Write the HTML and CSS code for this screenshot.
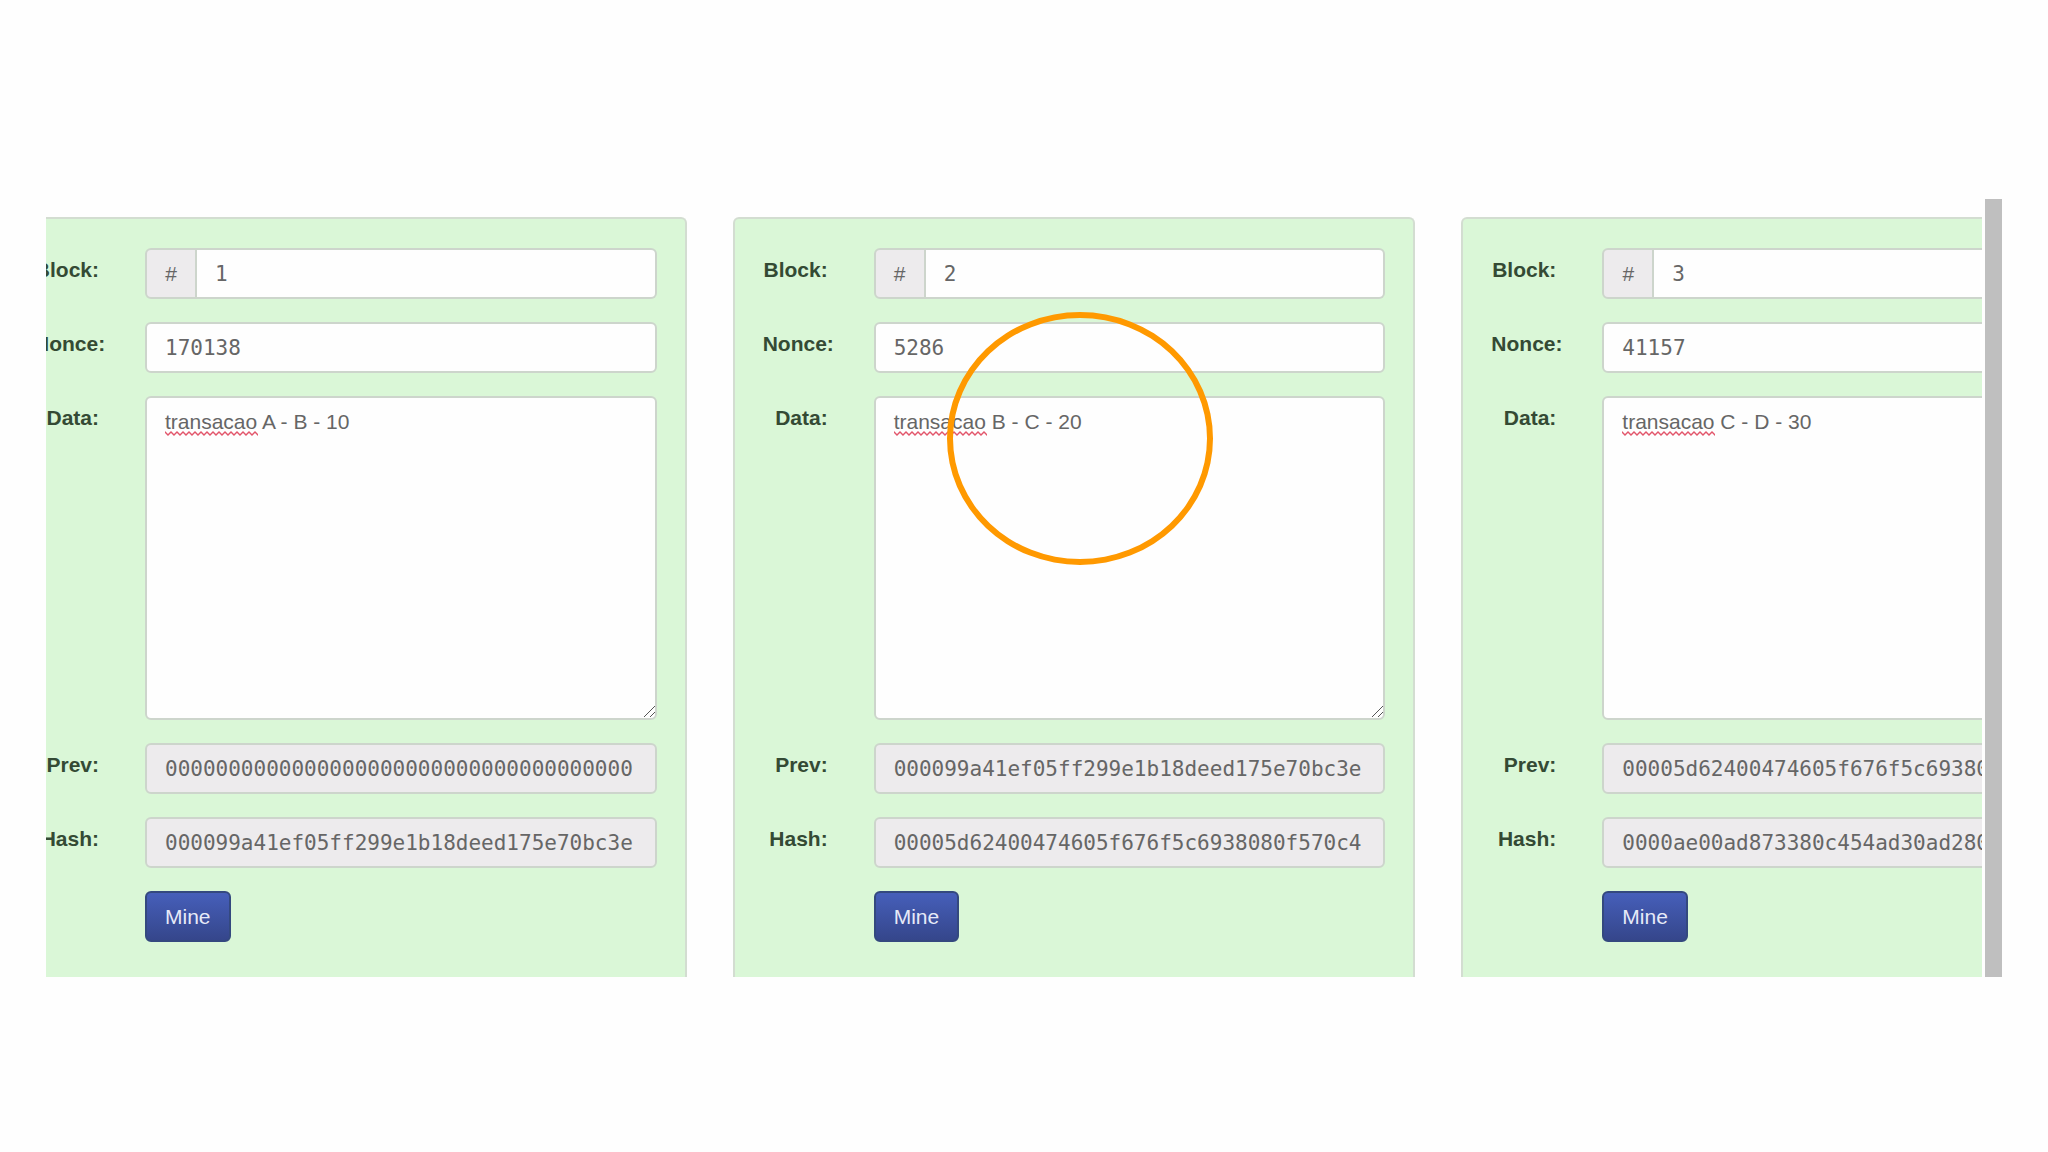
FILE: index.html
```html
<!DOCTYPE html>
<html lang="pt">
<head>
<meta charset="utf-8">
<title>Blockchain</title>
<link rel="stylesheet" href="styles.css">
</head>
<body>
<svg class="defs" aria-hidden="true">
  <defs>
    <pattern id="wave" width="6" height="5" patternUnits="userSpaceOnUse">
      <path d="M-1 1 L0 1 L3 4 L6 1 L7 1" fill="none" stroke="#e2566b" stroke-width="1.4"/>
    </pattern>
  </defs>
</svg>
<main class="viewer">
  <div class="chain">
    <form class="block">
      <label class="label" for="block1">Block:</label>
      <div class="group"><span class="addon">#</span><input class="field" id="block1" type="text" value="1"></div>
      <label class="label" for="nonce1">Nonce:</label>
      <input class="field" id="nonce1" type="text" value="170138">
      <label class="label" for="data1">Data:</label>
      <div class="area">
        <textarea class="field data" id="data1" spellcheck="false">transacao A - B - 10</textarea>
        <svg class="squiggle" aria-hidden="true"><rect width="100%" height="5" fill="url(#wave)"/></svg>
        <svg class="grip" viewBox="0 0 14 14" aria-hidden="true"><path d="M1 12 L12 1 M7 12 L12 7"/></svg>
      </div>
      <label class="label" for="prev1">Prev:</label>
      <input class="field locked" id="prev1" type="text" readonly value="0000000000000000000000000000000000000">
      <label class="label" for="hash1">Hash:</label>
      <input class="field locked" id="hash1" type="text" readonly value="000099a41ef05ff299e1b18deed175e70bc3e">
      <button class="mine" type="button">Mine</button>
    </form>
    <form class="block">
      <label class="label" for="block2">Block:</label>
      <div class="group"><span class="addon">#</span><input class="field" id="block2" type="text" value="2"></div>
      <label class="label" for="nonce2">Nonce:</label>
      <input class="field" id="nonce2" type="text" value="5286">
      <label class="label" for="data2">Data:</label>
      <div class="area">
        <textarea class="field data" id="data2" spellcheck="false">transacao B - C - 20</textarea>
        <svg class="squiggle" aria-hidden="true"><rect width="100%" height="5" fill="url(#wave)"/></svg>
        <svg class="grip" viewBox="0 0 14 14" aria-hidden="true"><path d="M1 12 L12 1 M7 12 L12 7"/></svg>
      </div>
      <label class="label" for="prev2">Prev:</label>
      <input class="field locked" id="prev2" type="text" readonly value="000099a41ef05ff299e1b18deed175e70bc3e">
      <label class="label" for="hash2">Hash:</label>
      <input class="field locked" id="hash2" type="text" readonly value="00005d62400474605f676f5c6938080f570c4">
      <button class="mine" type="button">Mine</button>
      <div class="highlight"></div>
    </form>
    <form class="block">
      <label class="label" for="block3">Block:</label>
      <div class="group"><span class="addon">#</span><input class="field" id="block3" type="text" value="3"></div>
      <label class="label" for="nonce3">Nonce:</label>
      <input class="field" id="nonce3" type="text" value="41157">
      <label class="label" for="data3">Data:</label>
      <div class="area">
        <textarea class="field data" id="data3" spellcheck="false">transacao C - D - 30</textarea>
        <svg class="squiggle" aria-hidden="true"><rect width="100%" height="5" fill="url(#wave)"/></svg>
      </div>
      <label class="label" for="prev3">Prev:</label>
      <input class="field locked" id="prev3" type="text" readonly value="00005d62400474605f676f5c6938080f570c4">
      <label class="label" for="hash3">Hash:</label>
      <input class="field locked" id="hash3" type="text" readonly value="0000ae00ad873380c454ad30ad280">
      <button class="mine" type="button">Mine</button>
    </form>
  </div>
  <div class="scrollbar"></div>
</main>
</body>
</html>
```
FILE: styles.css
```css
* {
  box-sizing: border-box;
}

body {
  margin: 0;
  background: #fefefe;
  font: 21px/30px "Liberation Sans", Arial, sans-serif;
  color: #666;
}

.defs {
  position: absolute;
  width: 0;
  height: 0;
}

.viewer {
  display: flex;
  gap: 3px;
  margin: 199px 46px;
}

/* The chain is scrolled sideways: its first and last blocks are cut off. */
.chain {
  flex: 1;
  min-width: 0;
  overflow: hidden;
  display: grid;
  grid-template-columns: repeat(3, calc((100% + 112px) / 3));
  gap: 46px;
  padding-top: 18px;
}

.block {
  position: relative;
  left: -42px;
  display: grid;
  grid-template-columns: 65px minmax(0, 1fr);
  gap: 23px 46px;
  padding: 29px 28px 35px;
  border: 2px solid #d3ddd1;
  border-bottom: 0;
  border-radius: 6px 6px 0 0;
  background: #daf7d7;
}

.label {
  padding-top: 7px;
  text-align: right;
  white-space: nowrap;
  font-weight: bold;
  color: #344a34;
}

.field {
  display: block;
  width: 100%;
  min-width: 0;
  height: 51px;
  margin: 0;
  padding: 9px 18px;
  border: 2px solid #cdd5cc;
  border-radius: 6px;
  outline: 0;
  background: #fefefe;
  color: #666;
  font: 21px/30px "DejaVu Sans Mono", monospace;
}

.locked {
  background: #edebed;
}

.group {
  display: flex;
}

.group .field {
  flex: 1;
  border-left: 0;
  border-radius: 0 6px 6px 0;
}

.addon {
  flex: none;
  width: 52px;
  height: 51px;
  padding-top: 9px;
  border: 2px solid #cdd5cc;
  border-radius: 6px 0 0 6px;
  background: #edebed;
  text-align: center;
}

.area {
  position: relative;
}

.data {
  height: 324px;
  resize: none;
  font-family: "Liberation Sans", Arial, sans-serif;
}

.squiggle {
  position: absolute;
  left: 20px;
  top: 35px;
  width: 93px;
  height: 5px;
}

.grip {
  position: absolute;
  right: 0;
  bottom: 1px;
  width: 14px;
  height: 14px;
  fill: none;
  stroke: #555;
}

.mine {
  grid-column: 2;
  justify-self: start;
  height: 51px;
  padding: 0 18px;
  border: 2px solid #34497f;
  border-radius: 6px;
  background: linear-gradient(#465fba, #35468b);
  color: #e6eaf8;
  font: inherit;
}

.highlight {
  position: absolute;
  left: 212px;
  top: 93px;
  width: 266px;
  height: 253px;
  border: 6px solid #ff9900;
  border-radius: 50%;
  pointer-events: none;
}

.scrollbar {
  flex: none;
  width: 17px;
  background: #bfbfbf;
}
```
